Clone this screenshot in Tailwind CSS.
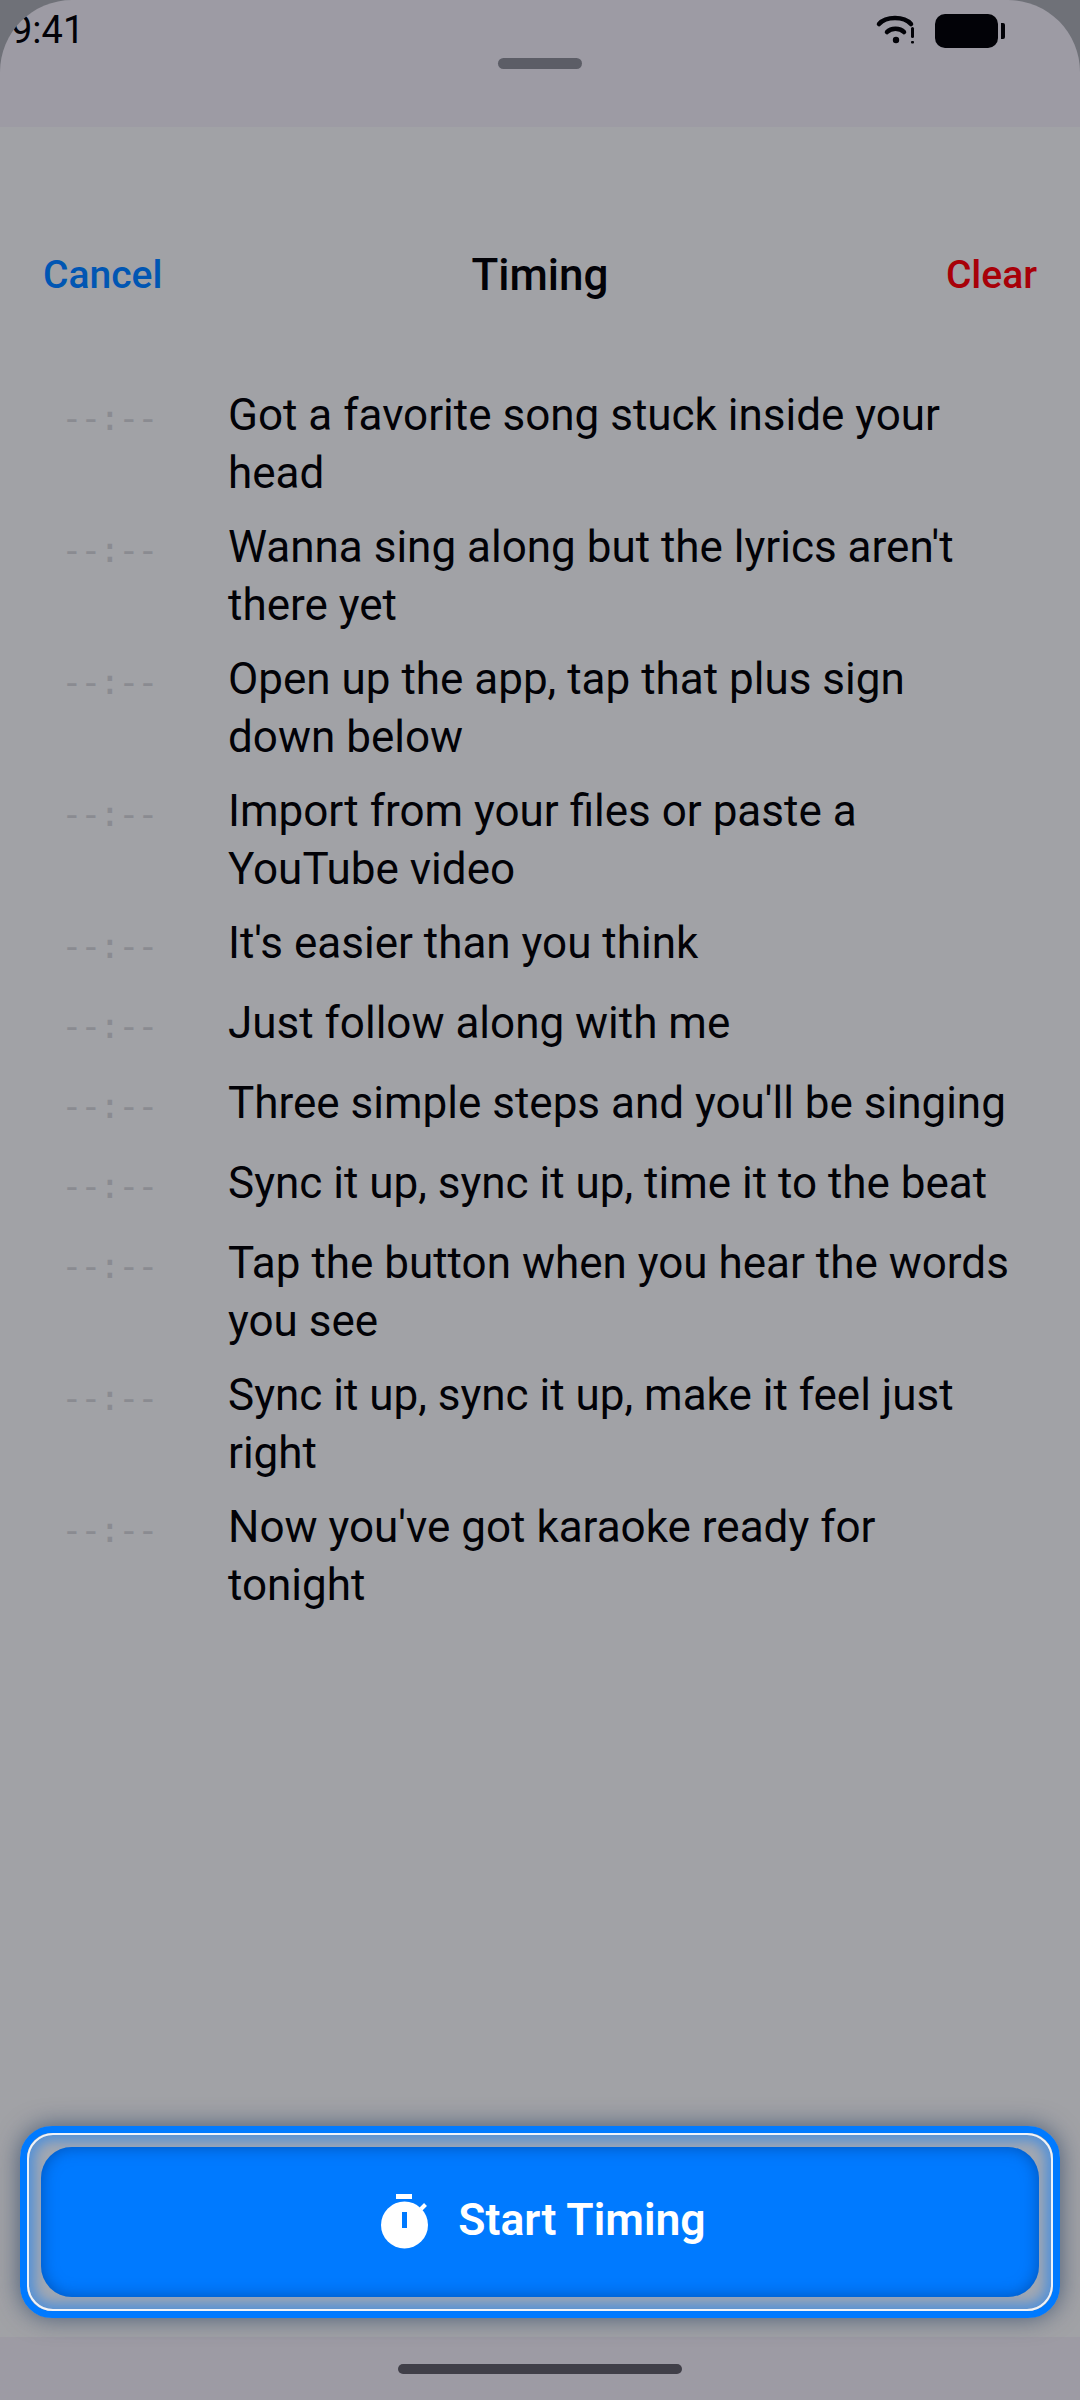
<!DOCTYPE html>
<html><head><meta charset="utf-8"><script src="https://cdn.jsdelivr.net/npm/@tailwindcss/browser@4"></script></head>
<body class="m-0">
<div class="w-[1080px] h-[2400px] bg-[#6f7178] overflow-hidden font-['Roboto',sans-serif]">
 <div class="h-full rounded-t-[72px] overflow-hidden flex flex-col bg-[#9d9ba4]">
  <div class="h-[127px] shrink-0 flex flex-col">
   <div class="h-[58px] flex justify-between pl-[11px] pr-[75px] pt-[9px]">
    <span class="text-[38px] leading-[42px] text-[#020207]">9:41</span>
    <div class="flex items-start gap-[20px] pt-[5px]">
     <svg width="40" height="30" viewBox="0 0 40 30" fill="none"><path d="M4 10C11 2 29 2 36 10" stroke="#020207" stroke-width="4.5" stroke-linecap="round"/><path d="M12 18C16 13.5 25 13.5 29 18" stroke="#020207" stroke-width="4.5" stroke-linecap="round"/><circle cx="21" cy="26" r="3.2" fill="#020207"/><rect x="36" y="13" width="3" height="11" rx="1.5" fill="#020207"/><rect x="36" y="27" width="3" height="2.5" rx="1" fill="#020207"/></svg>
     <div class="flex items-center gap-[3px]"><div class="w-[63px] h-[34px] rounded-[10px] bg-[#020207]"></div><div class="w-[4px] h-[16px] rounded-r-[2px] bg-[#020207]"></div></div>
    </div>
   </div>
   <div class="w-[84px] h-[11px] rounded-[6px] bg-[#5c5d66] mx-auto"></div>
  </div>
  <div class="h-[2210px] shrink-0 bg-[#a1a2a6] flex flex-col">
   <div class="flex items-center px-[43px] mt-[118px] h-[60px]">
    <span class="flex-1 text-[39px] font-medium text-[#0056b3]">Cancel</span>
    <span class="text-[44px] font-medium text-[#020207]">Timing</span>
    <span class="flex-1 text-right text-[39px] font-medium text-[#a80008]">Clear</span>
   </div>
   <div class="mt-[81px] flex flex-col gap-[16px] pl-[64px] pr-[60px] flex-1">
    <div class="flex min-h-[64px]"><span class="-ml-[3px] w-[167px] shrink-0 pt-[3px] text-[36px] tracking-[-2.7px] leading-[58px] font-['DejaVu_Sans_Mono',monospace] text-[#8a8b91]">--:--</span><p class="text-[44px] leading-[58px] text-[#020207]">Got a favorite song stuck inside your head</p></div>
    <div class="flex min-h-[64px]"><span class="-ml-[3px] w-[167px] shrink-0 pt-[3px] text-[36px] tracking-[-2.7px] leading-[58px] font-['DejaVu_Sans_Mono',monospace] text-[#8a8b91]">--:--</span><p class="text-[44px] leading-[58px] text-[#020207]">Wanna sing along but the lyrics aren't there yet</p></div>
    <div class="flex min-h-[64px]"><span class="-ml-[3px] w-[167px] shrink-0 pt-[3px] text-[36px] tracking-[-2.7px] leading-[58px] font-['DejaVu_Sans_Mono',monospace] text-[#8a8b91]">--:--</span><p class="text-[44px] leading-[58px] text-[#020207]">Open up the app, tap that plus sign down below</p></div>
    <div class="flex min-h-[64px]"><span class="-ml-[3px] w-[167px] shrink-0 pt-[3px] text-[36px] tracking-[-2.7px] leading-[58px] font-['DejaVu_Sans_Mono',monospace] text-[#8a8b91]">--:--</span><p class="text-[44px] leading-[58px] text-[#020207]">Import from your files or paste a YouTube video</p></div>
    <div class="flex min-h-[64px]"><span class="-ml-[3px] w-[167px] shrink-0 pt-[3px] text-[36px] tracking-[-2.7px] leading-[58px] font-['DejaVu_Sans_Mono',monospace] text-[#8a8b91]">--:--</span><p class="text-[44px] leading-[58px] text-[#020207]">It's easier than you think</p></div>
    <div class="flex min-h-[64px]"><span class="-ml-[3px] w-[167px] shrink-0 pt-[3px] text-[36px] tracking-[-2.7px] leading-[58px] font-['DejaVu_Sans_Mono',monospace] text-[#8a8b91]">--:--</span><p class="text-[44px] leading-[58px] text-[#020207]">Just follow along with me</p></div>
    <div class="flex min-h-[64px]"><span class="-ml-[3px] w-[167px] shrink-0 pt-[3px] text-[36px] tracking-[-2.7px] leading-[58px] font-['DejaVu_Sans_Mono',monospace] text-[#8a8b91]">--:--</span><p class="text-[44px] leading-[58px] text-[#020207]">Three simple steps and you'll be singing</p></div>
    <div class="flex min-h-[64px]"><span class="-ml-[3px] w-[167px] shrink-0 pt-[3px] text-[36px] tracking-[-2.7px] leading-[58px] font-['DejaVu_Sans_Mono',monospace] text-[#8a8b91]">--:--</span><p class="text-[44px] leading-[58px] text-[#020207]">Sync it up, sync it up, time it to the beat</p></div>
    <div class="flex min-h-[64px]"><span class="-ml-[3px] w-[167px] shrink-0 pt-[3px] text-[36px] tracking-[-2.7px] leading-[58px] font-['DejaVu_Sans_Mono',monospace] text-[#8a8b91]">--:--</span><p class="text-[44px] leading-[58px] text-[#020207]">Tap the button when you hear the words you see</p></div>
    <div class="flex min-h-[64px]"><span class="-ml-[3px] w-[167px] shrink-0 pt-[3px] text-[36px] tracking-[-2.7px] leading-[58px] font-['DejaVu_Sans_Mono',monospace] text-[#8a8b91]">--:--</span><p class="text-[44px] leading-[58px] text-[#020207]">Sync it up, sync it up, make it feel just right</p></div>
    <div class="flex min-h-[64px]"><span class="-ml-[3px] w-[167px] shrink-0 pt-[3px] text-[36px] tracking-[-2.7px] leading-[58px] font-['DejaVu_Sans_Mono',monospace] text-[#8a8b91]">--:--</span><p class="text-[44px] leading-[58px] text-[#020207]">Now you've got karaoke ready for tonight</p></div>
   </div>
   <div class="mx-[20px] mb-[19px] h-[192px] rounded-[32px] border-[7px] border-[#007aff] shadow-[0_0_24px_rgba(0,35,80,0.55)]">
    <div class="h-full rounded-[26px] border-[2px] border-[#eef3fa] shadow-[inset_0_0_12px_6px_rgba(0,122,255,0.48)] bg-[#a2a8b2] p-[12px]">
     <div class="h-full rounded-[31px] bg-[#007aff] shadow-[inset_0_0_16px_rgba(0,50,120,0.55)] flex items-center justify-center gap-[29px] text-white pb-[2px] pl-[7px]">
      <svg width="48" height="55" viewBox="0 0 48 55"><rect x="15" y="0" width="16" height="5" fill="#fff"/><path d="M40 15L44.5 10.5" stroke="#fff" stroke-width="4"/><circle cx="23.5" cy="31" r="23.5" fill="#fff"/><rect x="21" y="18" width="5" height="16" fill="#007aff"/></svg>
      <span class="text-[44.5px] font-semibold leading-none mb-[2px]">Start Timing</span>
     </div>
    </div>
   </div>
  </div>
  <div class="flex-1 flex justify-center pt-[1px]"><div class="w-[284px] h-[10px] rounded-[5px] bg-[#403f48] mt-[26px]"></div></div>
 </div>
</div>
</body></html>
